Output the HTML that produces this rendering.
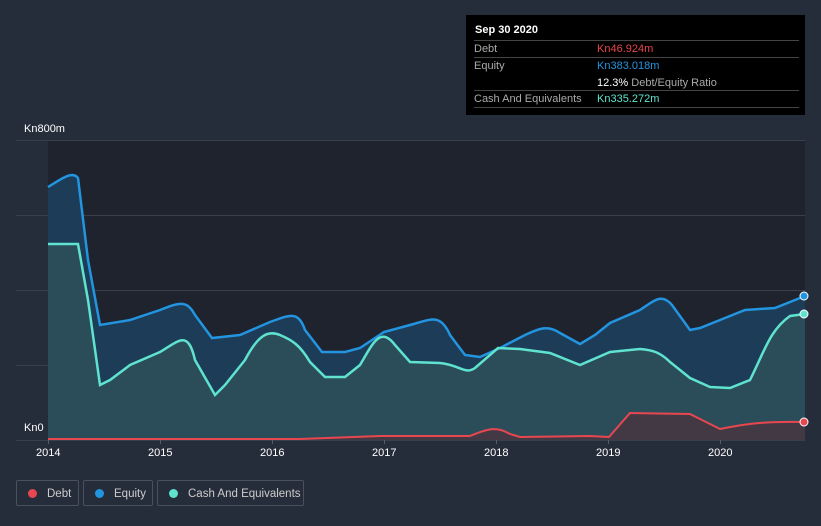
<!DOCTYPE html><html><head><style>
body{margin:0;width:821px;height:526px;background:#262d3a;font-family:"Liberation Sans",sans-serif;overflow:hidden;position:relative}
.t{position:absolute;font-size:11px;color:#fff}
.tip{position:absolute;left:466px;top:15px;width:339px;height:100px;background:#000;font-size:11px;color:#aaa}
.tip .r{position:absolute;left:8px;right:6px;border-top:1px solid #444;height:17px}
.lg{position:absolute;top:480px;height:26px;border:1px solid #4a505c;border-radius:2px;font-size:11.5px;color:#ccc;line-height:26px;box-sizing:border-box;white-space:nowrap;overflow:hidden}
.lg i{display:inline-block;width:9px;height:9px;border-radius:50%;margin:0 10px 0 11px;vertical-align:-1px}
</style></head><body>
<svg width="821" height="526" style="position:absolute;left:0;top:0">
<rect x="48" y="140" width="757" height="300" fill="#1e232d"/>
<g stroke="#3a404b" stroke-width="1"><line x1="16" y1="140.5" x2="805" y2="140.5"/><line x1="16" y1="215.5" x2="805" y2="215.5"/><line x1="16" y1="290.5" x2="805" y2="290.5"/><line x1="16" y1="365.5" x2="805" y2="365.5"/><line x1="16" y1="440.5" x2="805" y2="440.5"/></g>
<path fill="#1d3c58" d="M48,187 C60,180 72,170 78,178 L88,260 L100,325 L130,320 L160,310 C180,302 187,300 195,315 L212,338 L240,335 L270,322 C290,315 298,310 305,330 L322,352 L345,352 L360,348 L384,332 L410,325 C430,320 440,312 450,335 L465,355 L480,357 L500,348 L525,335 C540,328 548,325 560,333 L580,344 L595,335 L610,323 L640,310 C655,300 662,293 672,305 L690,330 L700,328 L720,320 L745,310 L775,308 L805,296 L805,440 L48,440Z"/>
<path fill="#2b4d5a" d="M48,244 L78,244 L88,300 L100,385 L110,380 L130,365 L160,352 C180,340 188,330 195,360 L215,395 L225,385 L245,360 C258,335 268,330 280,335 C292,340 300,345 310,362 L325,377 L345,377 L360,365 C372,345 380,325 395,345 L410,362 L440,363 C460,365 465,375 475,368 L498,348 L520,349 L550,353 L580,365 L610,352 L640,349 C652,350 660,352 670,362 L690,378 L710,387 L730,388 L750,380 C765,350 770,330 790,316 L805,314 L805,440 L48,440Z"/>
<path fill="none" stroke="#2394df" stroke-width="2.5" d="M48,187 C60,180 72,170 78,178 L88,260 L100,325 L130,320 L160,310 C180,302 187,300 195,315 L212,338 L240,335 L270,322 C290,315 298,310 305,330 L322,352 L345,352 L360,348 L384,332 L410,325 C430,320 440,312 450,335 L465,355 L480,357 L500,348 L525,335 C540,328 548,325 560,333 L580,344 L595,335 L610,323 L640,310 C655,300 662,293 672,305 L690,330 L700,328 L720,320 L745,310 L775,308 L805,296"/>
<path fill="none" stroke="#5fe3cf" stroke-width="2.5" d="M48,244 L78,244 L88,300 L100,385 L110,380 L130,365 L160,352 C180,340 188,330 195,360 L215,395 L225,385 L245,360 C258,335 268,330 280,335 C292,340 300,345 310,362 L325,377 L345,377 L360,365 C372,345 380,325 395,345 L410,362 L440,363 C460,365 465,375 475,368 L498,348 L520,349 L550,353 L580,365 L610,352 L640,349 C652,350 660,352 670,362 L690,378 L710,387 L730,388 L750,380 C765,350 770,330 790,316 L805,314"/>
<path fill="#4a3540" opacity=".8" d="M48,439 L300,439 L380,436 L470,436 C485,430 495,425 510,434 L520,437 L590,436 L609,437 L630,413 L690,414 L720,429 C740,425 760,421 805,422 L805,440 L48,440Z"/>
<path fill="none" stroke="#e8474f" stroke-width="2" d="M48,439 L300,439 L380,436 L470,436 C485,430 495,425 510,434 L520,437 L590,436 L609,437 L630,413 L690,414 L720,429 C740,425 760,421 805,422"/>
<circle cx="804" cy="296" r="4" fill="#2394df" stroke="#fff" stroke-width="1"/>
<circle cx="804" cy="314" r="4" fill="#5fe3cf" stroke="#fff" stroke-width="1"/>
<circle cx="804" cy="422" r="4" fill="#e8474f" stroke="#fff" stroke-width="1"/>
<g stroke="#555b66"><line x1="48.5" y1="440" x2="48.5" y2="444"/><line x1="160.5" y1="440" x2="160.5" y2="444"/><line x1="272.5" y1="440" x2="272.5" y2="444"/><line x1="384.5" y1="440" x2="384.5" y2="444"/><line x1="496.5" y1="440" x2="496.5" y2="444"/><line x1="608.5" y1="440" x2="608.5" y2="444"/><line x1="720.5" y1="440" x2="720.5" y2="444"/></g>
</svg>
<div class="t" style="left:24px;top:123px">Kn800m</div>
<div class="t" style="left:24px;top:422px">Kn0</div>
<div class="t" style="left:36px;top:447px">2014</div>
<div class="t" style="left:148px;top:447px">2015</div>
<div class="t" style="left:260px;top:447px">2016</div>
<div class="t" style="left:372px;top:447px">2017</div>
<div class="t" style="left:484px;top:447px">2018</div>
<div class="t" style="left:596px;top:447px">2019</div>
<div class="t" style="left:708px;top:447px">2020</div>
<div class="tip">
<div style="position:absolute;left:9px;top:9px;color:#fff;font-weight:bold">Sep 30 2020</div>
<div class="r" style="top:25px"><span style="position:absolute;top:2px">Debt</span><span style="position:absolute;left:123px;top:2px;color:#e8474f">Kn46.924m</span></div>
<div class="r" style="top:42px"><span style="position:absolute;top:2px">Equity</span><span style="position:absolute;left:123px;top:2px;color:#2394df">Kn383.018m</span><span style="position:absolute;left:123px;top:19px;white-space:nowrap"><b style="color:#fff;font-weight:normal">12.3%</b> Debt/Equity Ratio</span></div>
<div class="r" style="top:75px"><span style="position:absolute;top:2px">Cash And Equivalents</span><span style="position:absolute;left:123px;top:2px;color:#5fe3cf">Kn335.272m</span></div>
<div class="r" style="top:92px;height:0"></div>
</div>
<div class="lg" style="left:16px;width:63px"><i style="background:#e8474f"></i>Debt</div>
<div class="lg" style="left:83px;width:70px"><i style="background:#2394df"></i>Equity</div>
<div class="lg" style="left:157px;width:147px"><i style="background:#5fe3cf"></i>Cash And Equivalents</div>
</body></html>
